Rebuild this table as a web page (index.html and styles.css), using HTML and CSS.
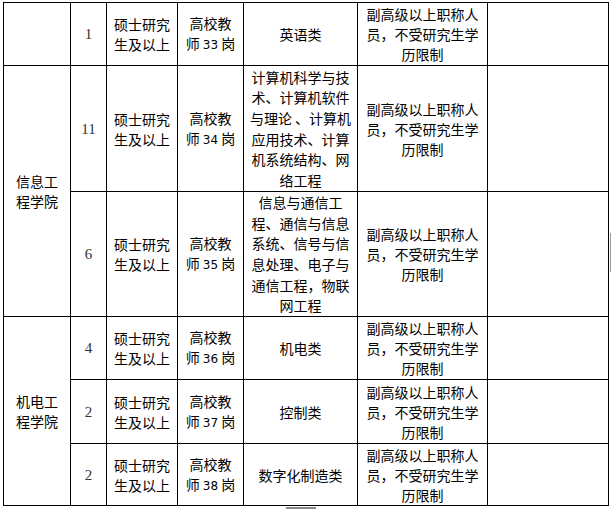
FILE: index.html
```html
<!DOCTYPE html>
<html lang="zh">
<head>
<meta charset="utf-8">
<title>岗位表</title>
<link rel="stylesheet" href="styles.css">
</head>
<body>
<div class="page">
<table class="jobs">
  <colgroup>
    <col class="c-dept"><col class="c-num"><col class="c-edu"><col class="c-post"><col class="c-major"><col class="c-note"><col class="c-extra">
  </colgroup>
  <tbody>
    <tr class="r1">
      <td></td>
      <td class="num">1</td>
      <td>硕士研究<br>生及以上</td>
      <td>高校教<br>师 <span class="digits">33</span> 岗</td>
      <td>英语类</td>
      <td>副高级以上职称人<br>员，不受研究生学<br>历限制</td>
      <td></td>
    </tr>
    <tr class="r2">
      <td rowspan="2">信息工<br>程学院</td>
      <td class="num">11</td>
      <td>硕士研究<br>生及以上</td>
      <td>高校教<br>师 <span class="digits">34</span> 岗</td>
      <td class="long">计算机科学与技<br>术、计算机软件<br>与理论 、计算机<br>应用技术、计算<br>机系统结构、网<br>络工程</td>
      <td>副高级以上职称人<br>员，不受研究生学<br>历限制</td>
      <td></td>
    </tr>
    <tr class="r3">
      <td class="num">6</td>
      <td>硕士研究<br>生及以上</td>
      <td>高校教<br>师 <span class="digits">35</span> 岗</td>
      <td class="long">信息与通信工<br>程、通信与信息<br>系统、信号与信<br>息处理、电子与<br>通信工程，物联<br>网工程</td>
      <td>副高级以上职称人<br>员，不受研究生学<br>历限制</td>
      <td></td>
    </tr>
    <tr class="r4">
      <td rowspan="3">机电工<br>程学院</td>
      <td class="num">4</td>
      <td>硕士研究<br>生及以上</td>
      <td>高校教<br>师 <span class="digits">36</span> 岗</td>
      <td>机电类</td>
      <td>副高级以上职称人<br>员，不受研究生学<br>历限制</td>
      <td></td>
    </tr>
    <tr class="r5">
      <td class="num">2</td>
      <td>硕士研究<br>生及以上</td>
      <td>高校教<br>师 <span class="digits">37</span> 岗</td>
      <td>控制类</td>
      <td>副高级以上职称人<br>员，不受研究生学<br>历限制</td>
      <td></td>
    </tr>
    <tr class="r6">
      <td class="num">2</td>
      <td>硕士研究<br>生及以上</td>
      <td>高校教<br>师 <span class="digits">38</span> 岗</td>
      <td>数字化制造类</td>
      <td>副高级以上职称人<br>员，不受研究生学<br>历限制</td>
      <td></td>
    </tr>
  </tbody>
</table>
<div class="scroll-h"></div>
<div class="scroll-v"></div>
</div>
</body>
</html>
```
FILE: styles.css
```css
html, body {
  margin: 0;
  padding: 0;
  background: #fff;
}
.page {
  position: relative;
  width: 611px;
  height: 509px;
  overflow: hidden;
  padding: 2px 0 0 3px;
  box-sizing: border-box;
}
.jobs {
  border-collapse: collapse;
  table-layout: fixed;
  width: 606px;
  font-family: "Noto Sans CJK SC", "Liberation Sans", sans-serif;
  font-size: 14px;
  line-height: 20px;
  color: #000;
}
.jobs td {
  border: 1px solid #000;
  padding: 0;
  text-align: center;
  vertical-align: middle;
  white-space: nowrap;
}
.jobs td.long {
  line-height: 20.6px;
}
.c-dept { width: 67px; }
.c-num { width: 36px; }
.c-edu { width: 71px; }
.c-post { width: 66px; }
.c-major { width: 114px; }
.c-note { width: 130px; }
.c-extra { width: 121px; }
.r1 { height: 63px; }
.r2 { height: 126px; }
.r3 { height: 125px; }
.r4 { height: 63px; }
.r5 { height: 64px; }
.r6 { height: 62px; }
.num {
  font-family: "Liberation Serif", serif;
  font-size: 15px;
  color: #333;
}
.digits {
  font-family: "DejaVu Sans", "Liberation Sans", sans-serif;
  font-size: 12px;
}
.scroll-h {
  position: absolute;
  left: 286px;
  top: 507px;
  width: 30px;
  height: 2px;
  background: #8a8a8a;
}
.scroll-v {
  position: absolute;
  left: 610px;
  top: 233px;
  width: 1px;
  height: 39px;
  background: #9a9a9a;
}
```
